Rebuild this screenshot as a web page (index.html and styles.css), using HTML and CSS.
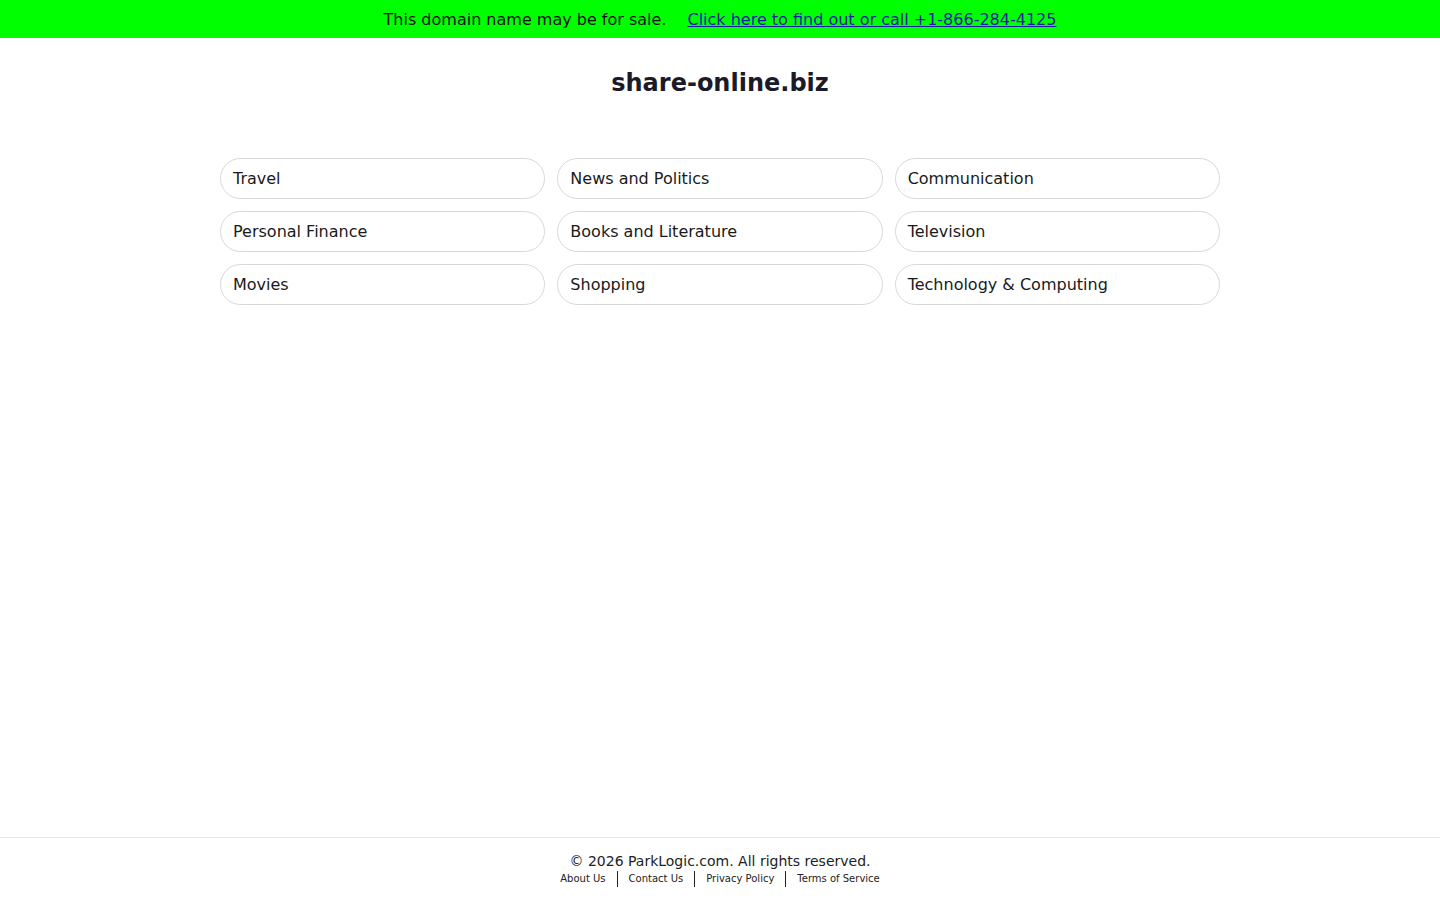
FILE: index.html
```html
<!DOCTYPE html>
<html lang="en">
<head>
    <meta charset="UTF-8">
    <meta name="viewport" content="width=device-width, initial-scale=1.0">
    <title>share-online.biz</title>
    <link rel="stylesheet" href="styles.css">
</head>
<body>
    <div class="sale-banner">
        <span>This domain name may be for sale.</span>
        <a href="#">Click here to find out or call +1-866-284-4125</a>
    </div>

    <main class="content">
        <h1 class="domain">share-online.biz</h1>

        <div class="links-grid">
            <a class="link-item" href="#">Travel</a>
            <a class="link-item" href="#">News and Politics</a>
            <a class="link-item" href="#">Communication</a>
            <a class="link-item" href="#">Personal Finance</a>
            <a class="link-item" href="#">Books and Literature</a>
            <a class="link-item" href="#">Television</a>
            <a class="link-item" href="#">Movies</a>
            <a class="link-item" href="#">Shopping</a>
            <a class="link-item" href="#">Technology &amp; Computing</a>
        </div>
    </main>

    <footer>
        <div class="copyright">&copy; 2026 ParkLogic.com. All rights reserved.</div>
        <div class="footer-links">
            <a href="#">About Us</a>
            <a href="#">Contact Us</a>
            <a href="#">Privacy Policy</a>
            <a href="#">Terms of Service</a>
        </div>
    </footer>
</body>
</html>
```

FILE: styles.css
```css
body {
    font-family: 'DejaVu Sans', Verdana, sans-serif;
    margin: 0;
    padding: 0;
    background-color: #fff;
    color: #1a1a1a;
    min-height: 100vh;
    display: flex;
    flex-direction: column;
}

.sale-banner {
    background-color: #00ff00;
    height: 38px;
    display: flex;
    align-items: center;
    justify-content: center;
    gap: 21px;
    font-size: 16px;
    color: #111;
}

.sale-banner a {
    color: #1a1aa6;
    text-decoration: underline;
}

.content {
    flex: 1;
    width: 1000px;
    margin: 0 auto;
}

.domain {
    margin: 0;
    padding-top: 30px;
    text-align: center;
    font-size: 24px;
    line-height: 30px;
    font-weight: bold;
    color: #1a1a2a;
}

.links-grid {
    display: grid;
    grid-template-columns: repeat(3, 1fr);
    column-gap: 12px;
    row-gap: 12px;
    margin-top: 60px;
}

.link-item {
    display: block;
    height: 41px;
    box-sizing: border-box;
    line-height: 39px;
    padding: 0 12px;
    border: 1px solid #d8d8d8;
    border-radius: 21px;
    font-size: 16px;
    color: #1a1a1a;
    text-decoration: none;
}

footer {
    border-top: 1px solid #e6e6e6;
    height: 63px;
    box-sizing: border-box;
    padding-top: 14px;
    text-align: center;
}

.copyright {
    font-size: 14px;
    line-height: 18px;
    color: #222;
}

.footer-links {
    font-size: 10px;
    line-height: 16px;
    margin-top: 1px;
    display: flex;
    justify-content: center;
}

.footer-links a {
    color: #222;
    text-decoration: none;
    padding: 0 11px;
    border-left: 1px solid #222;
}

.footer-links a:first-child {
    border-left: none;
}
```
